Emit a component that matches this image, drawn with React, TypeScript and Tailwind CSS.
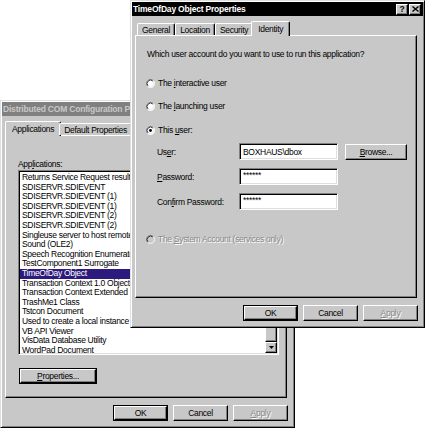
import type { ReactNode } from 'react';

const APPS = [
  'Returns Service Request result',
  'SDISERVR.SDIEVENT',
  'SDISERVR.SDIEVENT (1)',
  'SDISERVR.SDIEVENT (1)',
  'SDISERVR.SDIEVENT (2)',
  'SDISERVR.SDIEVENT (2)',
  'Singleuse server to host remote',
  'Sound (OLE2)',
  'Speech Recognition Enumerator',
  'TestComponent1 Surrogate',
  'TimeOfDay Object',
  'Transaction Context 1.0 Object',
  'Transaction Context Extended',
  'TrashMe1 Class',
  'Tstcon Document',
  'Used to create a local instance',
  'VB API Viewer',
  'VisData Database Utility',
  'WordPad Document',
];

// classic 3d bevels
const raised =
  'border border-t-white border-l-white border-r-black border-b-black shadow-[inset_-1px_-1px_0_#808080]';
const sunken =
  'border border-t-[#808080] border-l-[#808080] border-r-white border-b-white shadow-[inset_1px_1px_0_#000,inset_-1px_-1px_0_#dfdfdf]';

function Btn({ children, def, disabled, className = '' }: { children: ReactNode; def?: boolean; disabled?: boolean; className?: string }) {
  return (
    <div className={`${def ? 'border border-black' : ''} ${className}`}>
      <div className={`h-full bg-[#c8c8c8] flex items-center justify-center ${raised}`}>
        <span className={disabled ? 'text-[#8a8a8a] [text-shadow:1px_1px_0_#fff]' : ''}>{children}</span>
      </div>
    </div>
  );
}

function RadioDot({ checked, disabled }: { checked?: boolean; disabled?: boolean }) {
  return (
    <svg width="9" height="9" viewBox="0 0 12 12" className="shrink-0">
      <circle cx="6" cy="6" r="5.5" fill={disabled ? '#c8c8c8' : '#fff'} />
      <path d="M2.1 9.9 A5.5 5.5 0 0 1 9.9 2.1" stroke="#808080" fill="none" />
      <path d="M9.9 2.1 A5.5 5.5 0 0 1 2.1 9.9" stroke="#fff" fill="none" />
      <path d="M2.8 9.2 A4.5 4.5 0 0 1 9.2 2.8" stroke="#000" fill="none" />
      <path d="M9.2 2.8 A4.5 4.5 0 0 1 2.8 9.2" stroke="#dfdfdf" fill="none" />
      {checked && <circle cx="6" cy="6" r="1.9" fill="#000" />}
    </svg>
  );
}

function Radio({ label, checked, disabled, className = '' }: { label: ReactNode; checked?: boolean; disabled?: boolean; className?: string }) {
  return (
    <div className={`h-[10px] flex items-center gap-[3px] ${className}`}>
      <RadioDot checked={checked} disabled={disabled} />
      <span className={disabled ? 'text-[#8a8a8a] [text-shadow:1px_1px_0_#fff]' : ''}>{label}</span>
    </div>
  );
}

function Tabs({ names, active }: { names: string[]; active: number }) {
  return (
    <div className="mt-[5px] h-[14px] flex items-end pl-[5px] relative z-10">
      {names.map((n, i) =>
        i === active ? (
          <div key={n} className="h-[15px] -mb-[1px] -mx-[2px] px-[6px] bg-[#c8c8c8] border-t border-l border-r border-t-white border-l-white border-r-black rounded-t-[2px] shadow-[inset_-1px_0_0_#808080] flex items-center">
            {n}
          </div>
        ) : (
          <div key={n} className="h-[12px] px-[4px] bg-[#c8c8c8] border-t border-l border-r border-t-white border-l-white border-r-black rounded-t-[2px] shadow-[inset_-1px_0_0_#808080] flex items-center">
            {n}
          </div>
        ),
      )}
    </div>
  );
}

function Window({ title, active, tabs, tab, children, className = '' }: {
  title: string; active?: boolean; tabs: string[]; tab: number; children: ReactNode; className?: string;
}) {
  return (
    <div className={`absolute w-[295px] h-[328px] bg-[#c8c8c8] p-[1px] flex flex-col border border-t-[#dfdfdf] border-l-[#dfdfdf] border-r-black border-b-black shadow-[inset_1px_1px_0_#fff,inset_-1px_-1px_0_#808080] ${className}`}>
      <div className={`h-[14px] flex items-center pl-[1px] pr-[2px] ${active ? 'bg-black text-white' : 'bg-[#808080] text-[#c8c8c8]'}`}>
        <span className="font-bold text-[8.5px] tracking-[-0.2px] whitespace-nowrap">{title}</span>
        <div className="ml-auto flex gap-[1px]">
          <div className={`w-[12px] h-[11px] bg-[#c8c8c8] text-black font-bold flex items-center justify-center ${raised}`}>?</div>
          <div className={`w-[12px] h-[11px] bg-[#c8c8c8] flex items-center justify-center ${raised}`}>
            <svg width="7" height="6" viewBox="0 0 7 6">
              <path d="M0.5 0.5 L6.5 5.5 M6.5 0.5 L0.5 5.5" stroke="#000" strokeWidth="1.4" />
            </svg>
          </div>
        </div>
      </div>
      <Tabs names={tabs} active={tab} />
      <div className={`h-[263px] ml-[3px] mr-[6px] ${raised}`}>{children}</div>
      <div className="mt-[7px] flex justify-end gap-[5px] pr-[5px]">
        <Btn def className="w-[55px] h-[16px]">OK</Btn>
        <Btn className="w-[55px] h-[16px]">Cancel</Btn>
        <Btn disabled className="w-[55px] h-[16px]"><u>A</u>pply</Btn>
      </div>
    </div>
  );
}

function AppList() {
  return (
    <div className={`mt-[1px] w-[261px] h-[185px] bg-white flex overflow-hidden p-[1px] ${sunken}`}>
      <div className="flex-1 pt-[1px]">
        {APPS.map((a, i) => (
          <div key={i} className={`h-[9.6px] leading-[9.6px] pl-[2px] whitespace-nowrap ${a === 'TimeOfDay Object' ? 'bg-[#2c1a7c] text-white' : ''}`}>
            {a}
          </div>
        ))}
      </div>
      {/* scrollbar, parked at the bottom */}
      <div className="w-[12px] flex flex-col bg-[#e4e4e4]">
        <div className={`h-[11px] bg-[#c8c8c8] ${raised}`} />
        <div className={`mt-auto h-[40px] bg-[#c8c8c8] ${raised}`} />
        <div className={`h-[11px] bg-[#c8c8c8] flex items-center justify-center ${raised}`}>
          <svg width="5" height="3" viewBox="0 0 5 3"><path d="M0 0 H5 L2.5 3 Z" fill="#000" /></svg>
        </div>
      </div>
    </div>
  );
}

export default function App() {
  return (
    <div className="relative w-[425px] h-[429px] bg-white overflow-hidden font-['Liberation_Sans',Arial,sans-serif] text-[8.5px] tracking-[-0.3px] leading-[10px] text-black">
      <Window
        title="Distributed COM Configuration Properties"
        tabs={['Applications', 'Default Properties', 'Default Security']}
        tab={0}
        className="left-0 top-[100px] z-0"
      >
        <div className="pl-[12px] pt-[23px]">
          <div className="h-[10px]">App<u>l</u>ications:</div>
          <AppList />
          <Btn def className="mt-[13px] ml-[1px] w-[78px] h-[16px]"><u>P</u>roperties...</Btn>
        </div>
      </Window>

      <Window
        title="TimeOfDay Object Properties"
        active
        tabs={['General', 'Location', 'Security', 'Identity']}
        tab={3}
        className="left-[130px] top-0 z-10"
      >
        <div className="pt-[13px] pl-[10px] flex flex-col">
          <div className="h-[10px] ml-[1px]">Which user account do you want to use to run this application?</div>
          <Radio className="mt-[19px]" label={<>The <u>i</u>nteractive user</>} />
          <Radio className="mt-[13px]" label={<>The <u>l</u>aunching user</>} />
          <Radio className="mt-[14px]" checked label={<>This <u>u</u>ser:</>} />
          <div className="mt-[8px] ml-[11px] grid grid-cols-[82px_99px_auto] gap-y-[8px] items-center">
            <div>Us<u>e</u>r:</div>
            <div className={`h-[17px] bg-white px-[3px] flex items-center ${sunken}`}>BOXHAUS\dbox</div>
            <Btn className="ml-[7px] w-[62px] h-[16px]"><u>B</u>rowse...</Btn>
            <div><u>P</u>assword:</div>
            <div className={`h-[17px] bg-white px-[3px] pt-[1px] ${sunken}`}>******</div>
            <div />
            <div>Con<u>f</u>irm Password:</div>
            <div className={`h-[17px] bg-white px-[3px] pt-[1px] ${sunken}`}>******</div>
            <div />
          </div>
          <Radio className="mt-[24px]" disabled label={<>The <u>S</u>ystem Account (services only)</>} />
        </div>
      </Window>
    </div>
  );
}
